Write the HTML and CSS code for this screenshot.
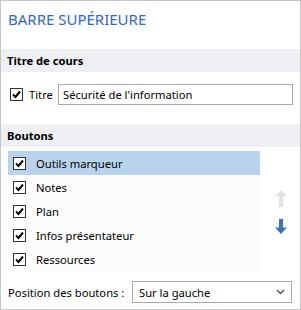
FILE: index.html
```html
<!DOCTYPE html>
<html lang="fr">
<head>
  <meta charset="UTF-8" />
  <title>Barre supérieure</title>
  <link rel="stylesheet" href="styles.css">
</head>
<body>

<div class="panel">
  <h1 class="panel-title">BARRE SUPÉRIEURE</h1>

  <div class="section-head">Titre de cours</div>
  <div class="title-row">
    <span class="check">
      <svg width="11" height="11" viewBox="0 0 11 11"><path d="M2 5.5 L4.5 8 L9 2.5" fill="none" stroke="#000" stroke-width="2"/></svg>
    </span>
    <span class="title-label">Titre</span>
    <div class="text-input">Sécurité de l'information</div>
  </div>

  <div class="section-head">Boutons</div>
  <div class="buttons-area">
    <ul class="btn-list">
      <li class="selected">
        <span class="check"><svg width="11" height="11" viewBox="0 0 11 11"><path d="M2 5.5 L4.5 8 L9 2.5" fill="none" stroke="#000" stroke-width="2"/></svg></span>
        Outils marqueur
      </li>
      <li>
        <span class="check"><svg width="11" height="11" viewBox="0 0 11 11"><path d="M2 5.5 L4.5 8 L9 2.5" fill="none" stroke="#000" stroke-width="2"/></svg></span>
        Notes
      </li>
      <li>
        <span class="check"><svg width="11" height="11" viewBox="0 0 11 11"><path d="M2 5.5 L4.5 8 L9 2.5" fill="none" stroke="#000" stroke-width="2"/></svg></span>
        Plan
      </li>
      <li>
        <span class="check"><svg width="11" height="11" viewBox="0 0 11 11"><path d="M2 5.5 L4.5 8 L9 2.5" fill="none" stroke="#000" stroke-width="2"/></svg></span>
        Infos présentateur
      </li>
      <li>
        <span class="check"><svg width="11" height="11" viewBox="0 0 11 11"><path d="M2 5.5 L4.5 8 L9 2.5" fill="none" stroke="#000" stroke-width="2"/></svg></span>
        Ressources
      </li>
    </ul>
    <div class="arrows">
      <svg width="12" height="17" viewBox="0 0 12 17"><path d="M6 0 L12 6.5 L8 6.5 L8 17 L4 17 L4 6.5 L0 6.5 Z" fill="#e1e3e6"/></svg>
      <svg width="12" height="15" viewBox="0 0 12 15"><path d="M4 0 L8 0 L8 8.5 L12 8.5 L6 15 L0 8.5 L4 8.5 Z" fill="#3d72b9"/></svg>
    </div>
  </div>

  <div class="position-row">
    <span class="position-label">Position des boutons :</span>
    <div class="select">
      Sur la gauche
      <svg width="9" height="6" viewBox="0 0 9 6"><path d="M1 1 L4.5 4.5 L8 1" fill="none" stroke="#555" stroke-width="1.5"/></svg>
    </div>
  </div>
</div>

</body>
</html>
```

FILE: styles.css
```css
* {
  margin: 0;
  padding: 0;
  box-sizing: border-box;
}

body {
  font-family: 'Noto Sans', 'Liberation Sans', sans-serif;
  font-size: 11.2px;
  color: #000;
  background: white;
}

.panel {
  width: 301px;
  height: 310px;
  border: 1px solid #c6c6c6;
  background: white;
}

.panel-title {
  margin: 8px 0 20px 7px;
  font-size: 15px;
  line-height: 20px;
  font-weight: normal;
  color: #3467c4;
}

.section-head {
  height: 23px;
  line-height: 23px;
  padding-left: 6px;
  background-color: #eff0f3;
  font-weight: bold;
}

.check {
  width: 13px;
  height: 13px;
  border: 1px solid #333;
  background: white;
  display: flex;
  align-items: center;
  justify-content: center;
  flex-shrink: 0;
}

.title-row {
  display: flex;
  align-items: center;
  height: 21px;
  margin: 12px 0 19px 9px;
}

.title-label {
  margin-left: 6px;
  width: 29px;
}

.text-input {
  width: 235px;
  height: 21px;
  line-height: 19px;
  border: 1px solid #a9a9a9;
  padding-left: 4px;
}

.buttons-area {
  display: flex;
  margin: 4px 0 0 7px;
}

.btn-list {
  list-style: none;
  width: 252px;
  background: #fcfcfc;
}

.btn-list li {
  height: 24px;
  display: flex;
  align-items: center;
  padding-left: 5px;
  gap: 10px;
}

.btn-list li.selected {
  background-color: #bad3ec;
}

.arrows {
  display: flex;
  flex-direction: column;
  align-items: center;
  gap: 12px;
  margin: 39px 0 0 15px;
}

.position-row {
  display: flex;
  align-items: center;
  margin: 10px 0 0 7px;
}

.position-label {
  width: 124px;
  flex-shrink: 0;
  white-space: nowrap;
}

.select {
  width: 160px;
  height: 22px;
  border: 1px solid #a9a9a9;
  display: flex;
  align-items: center;
  justify-content: space-between;
  padding: 0 6px 0 6px;
}
```
